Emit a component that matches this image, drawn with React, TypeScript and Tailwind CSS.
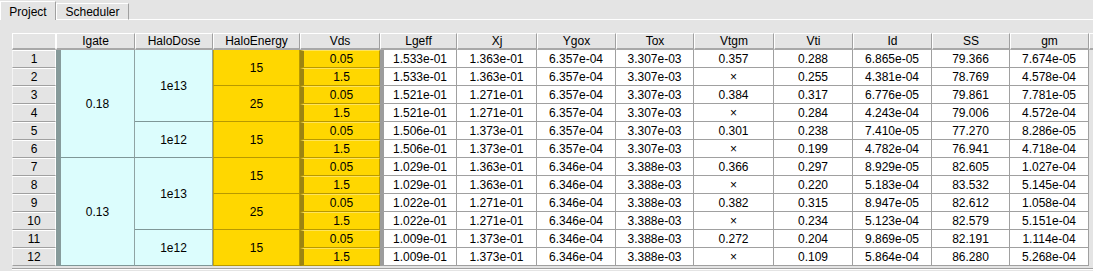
import React from 'react'

const font = { fontFamily: '"Liberation Sans", Arial, sans-serif' }

const headers = ['Igate', 'HaloDose', 'HaloEnergy', 'Vds', 'Lgeff', 'Xj', 'Ygox', 'Tox', 'Vtgm', 'Vti', 'Id', 'SS', 'gm']

// Vds, Lgeff, Xj, Ygox, Tox, Vtgm, Vti, Id, SS, gm
const rows: string[][] = [
  ['0.05', '1.533e-01', '1.363e-01', '6.357e-04', '3.307e-03', '0.357', '0.288', '6.865e-05', '79.366', '7.674e-05'],
  ['1.5', '1.533e-01', '1.363e-01', '6.357e-04', '3.307e-03', '×', '0.255', '4.381e-04', '78.769', '4.578e-04'],
  ['0.05', '1.521e-01', '1.271e-01', '6.357e-04', '3.307e-03', '0.384', '0.317', '6.776e-05', '79.861', '7.781e-05'],
  ['1.5', '1.521e-01', '1.271e-01', '6.357e-04', '3.307e-03', '×', '0.284', '4.243e-04', '79.006', '4.572e-04'],
  ['0.05', '1.506e-01', '1.373e-01', '6.357e-04', '3.307e-03', '0.301', '0.238', '7.410e-05', '77.270', '8.286e-05'],
  ['1.5', '1.506e-01', '1.373e-01', '6.357e-04', '3.307e-03', '×', '0.199', '4.782e-04', '76.941', '4.718e-04'],
  ['0.05', '1.029e-01', '1.363e-01', '6.346e-04', '3.388e-03', '0.366', '0.297', '8.929e-05', '82.605', '1.027e-04'],
  ['1.5', '1.029e-01', '1.363e-01', '6.346e-04', '3.388e-03', '×', '0.220', '5.183e-04', '83.532', '5.145e-04'],
  ['0.05', '1.022e-01', '1.271e-01', '6.346e-04', '3.388e-03', '0.382', '0.315', '8.947e-05', '82.612', '1.058e-04'],
  ['1.5', '1.022e-01', '1.271e-01', '6.346e-04', '3.388e-03', '×', '0.234', '5.123e-04', '82.579', '5.151e-04'],
  ['0.05', '1.009e-01', '1.373e-01', '6.346e-04', '3.388e-03', '0.272', '0.204', '9.869e-05', '82.191', '1.114e-04'],
  ['1.5', '1.009e-01', '1.373e-01', '6.346e-04', '3.388e-03', '×', '0.109', '5.864e-04', '86.280', '5.268e-04'],
]

// merged cells that start on a given row (0-based)
const igate: Record<number, string> = { 0: '0.18', 6: '0.13' }
const haloDose: Record<number, [string, number]> = { 0: ['1e13', 4], 4: ['1e12', 2], 6: ['1e13', 4], 10: ['1e12', 2] }
const haloEnergy: Record<number, string> = { 0: '15', 2: '25', 4: '15', 6: '15', 8: '25', 10: '15' }

const base = 'flex items-center justify-center text-[12px] leading-none text-black'
const headCell = `${base} bg-[#e4e4e4] border-l border-l-white border-t border-t-white border-r border-r-[#a0a0a0] border-b-2 border-b-[#a8a8a8]`
const rowHead = `${base} bg-[#e4e4e4] border-t border-t-white border-l border-l-[#f4f4f4] border-r border-r-white border-b border-b-[#a0a0a0]`
const whiteCell = `${base} bg-white border-r border-r-[#a0a0a0] border-b border-b-[#a0a0a0]`

export default function App() {
  return (
    <div className="w-[1093px] h-[271px] overflow-hidden bg-[#e4e4e4]" style={font}>
      {/* tabs */}
      <div className="flex items-end h-[20px]">
        <div className="w-[56px] h-[19px] pt-[1px] flex items-center justify-center text-[12px] text-black border-t border-t-white border-l border-l-white border-r border-r-[#a0a0a0]">
          Project
        </div>
        <div className="w-[73px] h-[17px] flex items-center justify-center text-[12px] text-black border-t border-t-white border-l border-l-white border-r border-r-[#a0a0a0] border-b border-b-white">
          Scheduler
        </div>
        <div className="flex-1 h-[1px] bg-white" />
      </div>

      {/* table */}
      <div className="pl-[12px] pt-[13px]">
        <div className="grid grid-cols-[44px_79px_78px_87px_80px_77px_80px_79px_78px_80px_79px_79px_78px_79px_30px] grid-rows-[17px_repeat(12,18px)] w-max">
          <div className={`${headCell} border-r-white border-l-[#f4f4f4]`} />
          {headers.map((h) => (
            <div key={h} className={headCell}>{h}</div>
          ))}
          <div className="bg-[#e4e4e4] border-l border-l-white border-t border-t-white border-b-2 border-b-[#a8a8a8]" />

          {rows.map((r, i) => (
            <React.Fragment key={i}>
              <div className={rowHead}>{i + 1}</div>
              {igate[i] !== undefined && (
                <div className={`${base} row-span-6 bg-[#dcfdfd] border-l-[5px] border-l-[#879b9b] border-r border-r-[#8fa3a3] border-b border-b-[#7f9797]`}>
                  {igate[i]}
                </div>
              )}
              {haloDose[i] !== undefined && (
                <div className={`${base} ${haloDose[i][1] === 4 ? 'row-span-4' : 'row-span-2'} bg-[#dcfdfd] border-r border-r-[#8fa3a3] border-b border-b-[#7f9797]`}>
                  {haloDose[i][0]}
                </div>
              )}
              {haloEnergy[i] !== undefined && (
                <div className={`${base} row-span-2 bg-[#ffd700] border-l border-l-[#c9a800] border-r border-r-[#b89900] border-b border-b-[#b89900]`}>
                  {haloEnergy[i]}
                </div>
              )}
              <div className={`${base} bg-[#ffd700] border-l-[4px] border-l-[#9c8412] border-t border-t-[#ffe45a] border-r border-r-[#b89900] border-b border-b-[#b89900]`}>
                {r[0]}
              </div>
              <div className={`${whiteCell} border-l-[4px] border-l-[#9c9c9c]`}>{r[1]}</div>
              {r.slice(2).map((v, j) => (
                <div key={j} className={whiteCell}>{v}</div>
              ))}
              <div className="bg-[#e4e4e4]" />
            </React.Fragment>
          ))}
        </div>
      </div>

      {/* bottom edge */}
      <div className="ml-[12px] mt-[2px] h-[1px] bg-[#a0a0a0]" />
      <div className="ml-[12px] h-[1px] bg-white" />
    </div>
  )
}
